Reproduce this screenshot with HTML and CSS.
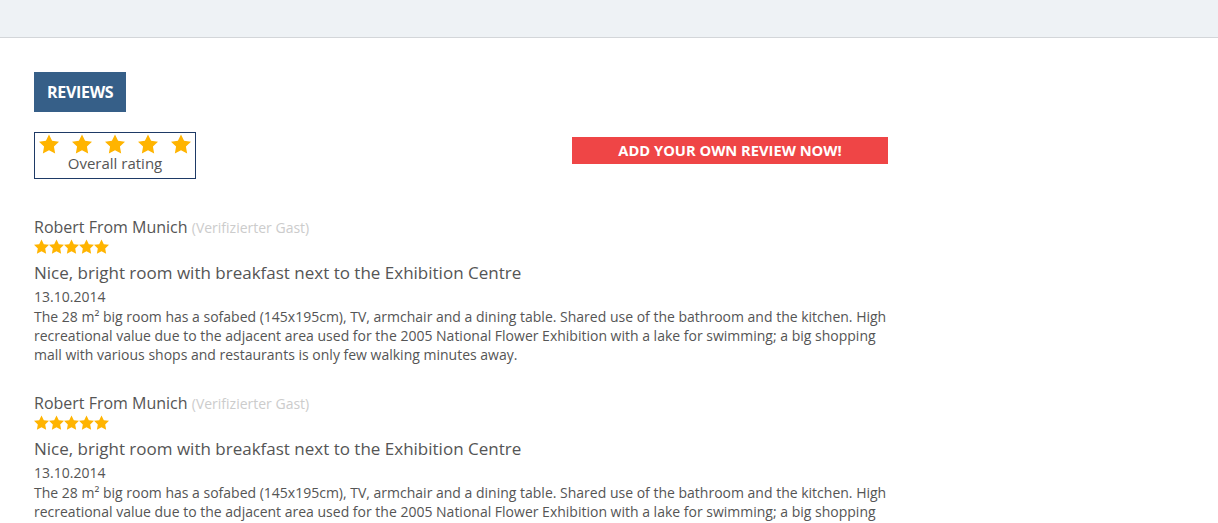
FILE: index.html
```html
<!DOCTYPE html>
<html>
<head>
<meta charset="utf-8">
<link rel="stylesheet" href="styles.css">
</head>
<body>
<div class="topbar"></div>
<main class="content">
  <div class="tab">REVIEWS</div>
  <div class="summary">
    <div class="overall">
      <div class="big-stars">
        <svg viewBox="0 0 24 24"><path d="M12 .6l3.7 7.6 8.3 1.1-6.1 5.8 1.5 8.3L12 19.4l-7.4 4 1.5-8.3L0 9.3l8.3-1.1z"/></svg>
        <svg viewBox="0 0 24 24"><path d="M12 .6l3.7 7.6 8.3 1.1-6.1 5.8 1.5 8.3L12 19.4l-7.4 4 1.5-8.3L0 9.3l8.3-1.1z"/></svg>
        <svg viewBox="0 0 24 24"><path d="M12 .6l3.7 7.6 8.3 1.1-6.1 5.8 1.5 8.3L12 19.4l-7.4 4 1.5-8.3L0 9.3l8.3-1.1z"/></svg>
        <svg viewBox="0 0 24 24"><path d="M12 .6l3.7 7.6 8.3 1.1-6.1 5.8 1.5 8.3L12 19.4l-7.4 4 1.5-8.3L0 9.3l8.3-1.1z"/></svg>
        <svg viewBox="0 0 24 24"><path d="M12 .6l3.7 7.6 8.3 1.1-6.1 5.8 1.5 8.3L12 19.4l-7.4 4 1.5-8.3L0 9.3l8.3-1.1z"/></svg>
      </div>
      <div class="overall-label">Overall rating</div>
    </div>
    <a class="add-btn">ADD YOUR OWN REVIEW NOW!</a>
  </div>

  <section class="review">
    <div class="author">Robert From Munich <span class="verified">(Verifizierter Gast)</span></div>
    <div class="small-stars">
      <svg viewBox="0 0 24 24"><path d="M12 .6l3.7 7.6 8.3 1.1-6.1 5.8 1.5 8.3L12 19.4l-7.4 4 1.5-8.3L0 9.3l8.3-1.1z"/></svg><svg viewBox="0 0 24 24"><path d="M12 .6l3.7 7.6 8.3 1.1-6.1 5.8 1.5 8.3L12 19.4l-7.4 4 1.5-8.3L0 9.3l8.3-1.1z"/></svg><svg viewBox="0 0 24 24"><path d="M12 .6l3.7 7.6 8.3 1.1-6.1 5.8 1.5 8.3L12 19.4l-7.4 4 1.5-8.3L0 9.3l8.3-1.1z"/></svg><svg viewBox="0 0 24 24"><path d="M12 .6l3.7 7.6 8.3 1.1-6.1 5.8 1.5 8.3L12 19.4l-7.4 4 1.5-8.3L0 9.3l8.3-1.1z"/></svg><svg viewBox="0 0 24 24"><path d="M12 .6l3.7 7.6 8.3 1.1-6.1 5.8 1.5 8.3L12 19.4l-7.4 4 1.5-8.3L0 9.3l8.3-1.1z"/></svg>
    </div>
    <h3 class="title">Nice, bright room with breakfast next to the Exhibition Centre</h3>
    <div class="date">13.10.2014</div>
    <p class="body">The 28 m² big room has a sofabed (145x195cm), TV, armchair and a dining table. Shared use of the bathroom and the kitchen. High recreational value due to the adjacent area used for the 2005 National Flower Exhibition with a lake for swimming; a big shopping mall with various shops and restaurants is only few walking minutes away.</p>
  </section>

  <section class="review">
    <div class="author">Robert From Munich <span class="verified">(Verifizierter Gast)</span></div>
    <div class="small-stars">
      <svg viewBox="0 0 24 24"><path d="M12 .6l3.7 7.6 8.3 1.1-6.1 5.8 1.5 8.3L12 19.4l-7.4 4 1.5-8.3L0 9.3l8.3-1.1z"/></svg><svg viewBox="0 0 24 24"><path d="M12 .6l3.7 7.6 8.3 1.1-6.1 5.8 1.5 8.3L12 19.4l-7.4 4 1.5-8.3L0 9.3l8.3-1.1z"/></svg><svg viewBox="0 0 24 24"><path d="M12 .6l3.7 7.6 8.3 1.1-6.1 5.8 1.5 8.3L12 19.4l-7.4 4 1.5-8.3L0 9.3l8.3-1.1z"/></svg><svg viewBox="0 0 24 24"><path d="M12 .6l3.7 7.6 8.3 1.1-6.1 5.8 1.5 8.3L12 19.4l-7.4 4 1.5-8.3L0 9.3l8.3-1.1z"/></svg><svg viewBox="0 0 24 24"><path d="M12 .6l3.7 7.6 8.3 1.1-6.1 5.8 1.5 8.3L12 19.4l-7.4 4 1.5-8.3L0 9.3l8.3-1.1z"/></svg>
    </div>
    <h3 class="title">Nice, bright room with breakfast next to the Exhibition Centre</h3>
    <div class="date">13.10.2014</div>
    <p class="body">The 28 m² big room has a sofabed (145x195cm), TV, armchair and a dining table. Shared use of the bathroom and the kitchen. High recreational value due to the adjacent area used for the 2005 National Flower Exhibition with a lake for swimming; a big shopping mall with various shops and restaurants is only few walking minutes away.</p>
  </section>
</main>
</body>
</html>
```

FILE: styles.css
```css
html, body {
  margin: 0;
  padding: 0;
  background: #fff;
  font-family: "Open Sans", "Liberation Sans", sans-serif;
  color: #555;
  overflow: hidden;
}

.topbar {
  height: 37px;
  background: #eef2f5;
  border-bottom: 1px solid #d3d6d9;
}

.content {
  width: 854px;
  padding: 34px 0 0 34px;
}

.tab {
  display: inline-block;
  background: #365f88;
  color: #fff;
  font-weight: 700;
  font-size: 16px;
  line-height: 40px;
  padding: 0 13px;
  letter-spacing: -0.3px;
}

.summary {
  display: flex;
  align-items: flex-start;
  margin-top: 20px;
}

.overall {
  width: 160px;
  height: 45px;
  border: 1px solid #1e3a66;
  display: flex;
  flex-direction: column;
  align-items: center;
}

.big-stars {
  display: flex;
  gap: 13px;
  margin-top: 1px;
}

.big-stars svg {
  width: 20px;
  height: 20px;
  fill: #ffb400;
}

.overall-label {
  font-size: 15px;
  line-height: 20px;
  margin-top: -1px;
  color: #555;
}

.add-btn {
  margin-left: 376px;
  margin-top: 5px;
  width: 316px;
  height: 27px;
  line-height: 27px;
  background: #ef4546;
  color: #fff;
  font-weight: 700;
  font-size: 14.7px;
  text-align: center;
  display: block;
}

.review {
  margin-top: 37px;
}

.review + .review {
  margin-top: 28px;
}

.author {
  font-size: 16px;
  line-height: 22px;
  color: #555;
}

.verified {
  font-size: 14px;
  color: #ccc;
}

.small-stars {
  display: flex;
  height: 15px;
  margin-top: 0px;
}

.small-stars svg {
  width: 15px;
  height: 15px;
  fill: #ffb400;
}

.title {
  margin: 6px 0 0;
  font-size: 17px;
  font-weight: 400;
  line-height: 26px;
  color: #555;
}

.date {
  font-size: 14px;
  line-height: 20px;
  color: #555;
  margin-top: 1px;
}

.body {
  margin: 0;
  font-size: 14px;
  line-height: 19px;
  color: #555;
}
```
